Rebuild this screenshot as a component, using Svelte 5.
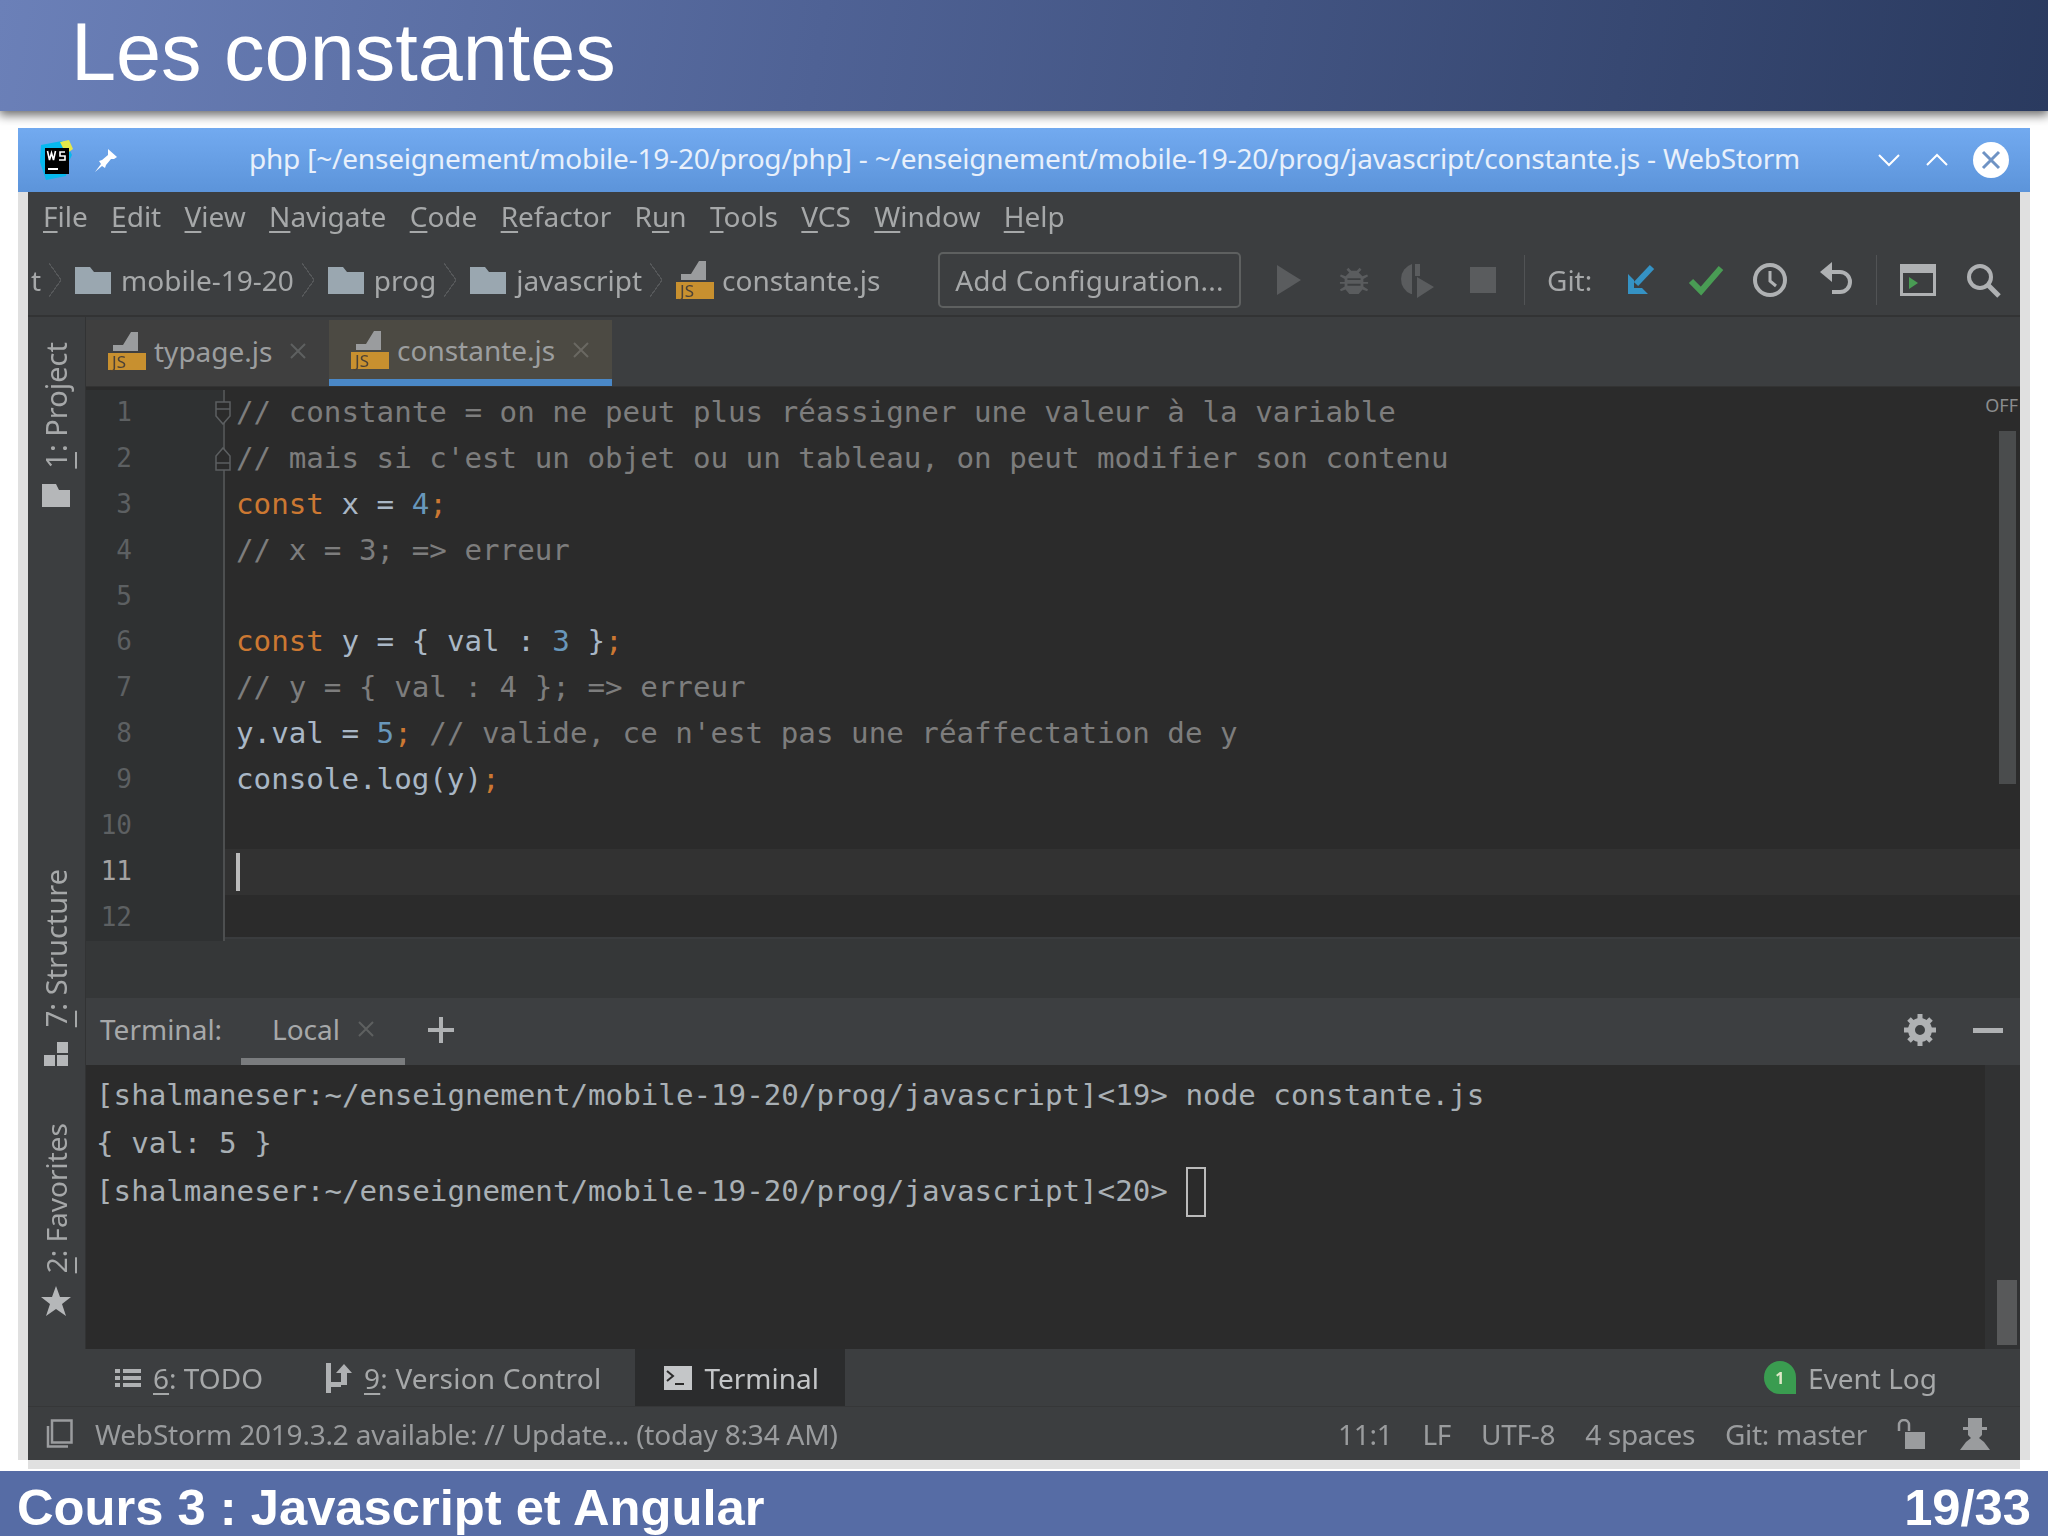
<script>
	// [before mnemonic, mnemonic, after]
	const menus = [['', 'F', 'ile'], ['', 'E', 'dit'], ['', 'V', 'iew'], ['', 'N', 'avigate'], ['', 'C', 'ode'], ['', 'R', 'efactor'], ['R', 'u', 'n'], ['', 'T', 'ools'], ['', 'V', 'CS'], ['', 'W', 'indow'], ['', 'H', 'elp']];

	// token classes: c comment, k keyword, n number, i identifier, p semicolon
	const lines = [
		[['c', "// constante = on ne peut plus réassigner une valeur à la variable"]],
		[['c', "// mais si c'est un objet ou un tableau, on peut modifier son contenu"]],
		[['k', 'const'], ['i', ' x = '], ['n', '4'], ['p', ';']],
		[['c', '// x = 3; => erreur']],
		[],
		[['k', 'const'], ['i', ' y = { val : '], ['n', '3'], ['i', ' }'], ['p', ';']],
		[['c', '// y = { val : 4 }; => erreur']],
		[['i', 'y.val = '], ['n', '5'], ['p', ';'], ['c', " // valide, ce n'est pas une réaffectation de y"]],
		[['i', 'console.log(y)'], ['p', ';']],
		[],
		[],
		[]
	];
	const prompt = '[shalmaneser:~/enseignement/mobile-19-20/prog/javascript]';
</script>

{#snippet jsIcon()}
	<span class="js-icon">
		<svg viewBox="0 0 38 19" width="38" height="19"><path d="M5 19v-6h10l8-13h7v19z" fill="#9a9c9e" /></svg>
		<span class="js-tag">JS</span>
	</span>
{/snippet}

{#snippet folder()}
	<svg class="folder" viewBox="0 0 36 27" width="36" height="27"><path d="M0 0h15l4 5h17v22H0z" fill="#9aa7b0" /></svg>
{/snippet}

<div class="slide">
	<header class="slide-head"><h1>Les constantes</h1></header>

	<main class="slide-body">
		<div class="window">
			<div class="titlebar">
				<svg class="ws-logo" viewBox="0 0 36 40" width="36" height="40">
					<path d="M3 5L24 1l6 6 4 8-4 8-2 13-20 4-6-18z" fill="#07b8ee" />
					<path d="M22 2l9-2 4 9-7 5z" fill="#e4e84a" />
					<rect x="7" y="8" width="24" height="26" fill="#000" />
					<rect x="10" y="28" width="10" height="2" fill="#fff" />
					<path d="M9.500 11l2 9 2-7 2 7 2-9M27 12h-5v4h5v4h-6" stroke="#fff" stroke-width="1.6" fill="none" />
				</svg>
				<svg class="pin" viewBox="0 0 24 24" width="24" height="24"><path d="M14 1l9 8-3 2-3 0-5 6-1 3-3-2-7 6 6-8-2-3 3-1 6-5z" fill="#fff" /></svg>
				<span class="title-text">php [~/enseignement/mobile-19-20/prog/php] - ~/enseignement/mobile-19-20/prog/javascript/constante.js - WebStorm</span>
				<svg class="win-btn" viewBox="0 0 24 14" width="24" height="14"><path d="M2 2l10 10L22 2" fill="none" stroke="#fff" stroke-width="2" /></svg>
				<svg class="win-btn" viewBox="0 0 24 14" width="24" height="14"><path d="M2 12L12 2l10 10" fill="none" stroke="#fff" stroke-width="2" /></svg>
				<svg class="win-close" viewBox="0 0 36 36" width="36" height="36"><circle cx="18" cy="18" r="18" fill="#fff" /><path d="M10 10l16 16M26 10L10 26" stroke="#6f93c4" stroke-width="3" /></svg>
			</div>

			<div class="ide">
				<nav class="menubar">
					{#each menus as m}
						<span>{m[0]}<u>{m[1]}</u>{m[2]}</span>
					{/each}
				</nav>

				<div class="toolbar">
					<div class="crumbs">
						<span>t</span><i class="chev"></i>
						{@render folder()}<span>mobile-19-20</span><i class="chev"></i>
						{@render folder()}<span>prog</span><i class="chev"></i>
						{@render folder()}<span>javascript</span><i class="chev"></i>
						{@render jsIcon()}<span>constante.js</span>
					</div>
					<div class="add-config">Add Configuration...</div>
					<div class="tools">
						<span class="tool"><svg viewBox="0 0 26 32" width="26" height="32"><path d="M1 1l24 15L1 31z" fill="#5a5c5e" /></svg></span>
						<span class="tool"><svg viewBox="0 0 32 36" width="30" height="34"><path d="M10 5l3 3h6l3-3 2 2-3 3 4 4 5-2 1 2-5 3v3h5v2h-5v3l5 3-1 2-5-2-4 5h-10l-4-5-5 2-1-2 5-3v-3H1v-2h5v-3l-5-3 1-2 5 2 4-4-3-3z" fill="#5a5c5e" /><path d="M9 17h14M9 23h14" stroke="#3c3e40" stroke-width="2" /></svg></span>
						<span class="tool"><svg viewBox="0 0 36 36" width="36" height="36"><path d="M12 2a16 16 0 0 0-1 30l1 0z" fill="#5a5c5e" /><path d="M15 2h5v12h-5zM17 15l17 10-17 11z" fill="#5a5c5e" /></svg></span>
						<span class="tool"><svg viewBox="0 0 26 26" width="26" height="26"><rect width="26" height="26" fill="#5a5c5e" /></svg></span>
						<i class="sep"></i>
						<span class="git-label">Git:</span>
						<span class="tool"><svg viewBox="0 0 32 32" width="32" height="32"><path d="M27 3L11 20" stroke="#3592c4" stroke-width="6" /><path d="M3 10v20h20l-6-6H9v-8z" fill="#3592c4" /></svg></span>
						<span class="tool"><svg viewBox="0 0 36 32" width="36" height="32"><path d="M3 17l10 10L33 4" fill="none" stroke="#499c54" stroke-width="6" /></svg></span>
						<span class="tool"><svg viewBox="0 0 36 36" width="36" height="36"><circle cx="18" cy="18" r="15" fill="none" stroke="#afb1b3" stroke-width="4" /><path d="M18 9v10l6 5" fill="none" stroke="#afb1b3" stroke-width="3" /></svg></span>
						<span class="tool"><svg viewBox="0 0 34 38" width="34" height="38"><path d="M11 11h11a9 9 0 0 1 0 20h-8" fill="none" stroke="#afb1b3" stroke-width="4" /><path d="M14 1v20L2 11z" fill="#afb1b3" /></svg></span>
						<i class="sep"></i>
						<span class="tool"><svg viewBox="0 0 36 32" width="36" height="32"><rect x="1.500" y="1.500" width="33" height="29" fill="none" stroke="#afb1b3" stroke-width="3" /><rect x="1" y="1" width="34" height="8" fill="#afb1b3" /><path d="M9 13l9 6-9 6z" fill="#499c54" /></svg></span>
						<span class="tool"><svg viewBox="0 0 36 36" width="36" height="36"><circle cx="15" cy="15" r="11" fill="none" stroke="#afb1b3" stroke-width="4" /><path d="M23 23l11 11" stroke="#afb1b3" stroke-width="5" /></svg></span>
					</div>
				</div>

				<div class="workspace">
					<aside class="strip">
						<div class="strip-item s1">
							<span class="vtext"><u>1</u>: Project</span>
							<svg viewBox="0 0 28 23" width="28" height="23"><path d="M0 23V0h14l3 6h11v17z" fill="#b5b7b9" /></svg>
						</div>
						<div class="strip-item s2">
							<span class="vtext"><u>7</u>: Structure</span>
							<svg viewBox="0 0 24 24" width="24" height="24"><path d="M13 0h11v11H13zM0 13h11v11H0zM13 13h11v11H13z" fill="#b5b7b9" /></svg>
						</div>
						<div class="strip-item s3">
							<span class="vtext"><u>2</u>: Favorites</span>
							<svg viewBox="0 0 30 30" width="30" height="30"><path d="M15 0l4 11h11l-9 7 4 12-10-7-10 7 4-12-9-7h11z" fill="#b5b7b9" /></svg>
						</div>
					</aside>

					<div class="panes">
						<div class="tabs">
							<div class="tab">{@render jsIcon()}<span>typage.js</span><svg class="x" viewBox="0 0 16 16" width="16" height="16"><path d="M1 1l14 14M15 1L1 15" stroke="#5e6060" stroke-width="2" /></svg></div>
							<div class="tab active">{@render jsIcon()}<span>constante.js</span><svg class="x" viewBox="0 0 16 16" width="16" height="16"><path d="M1 1l14 14M15 1L1 15" stroke="#6a6862" stroke-width="2" /></svg></div>
						</div>

						<div class="editor">
							<span class="off">OFF</span>
							<i class="editor-thumb"></i>
							{#each lines as line, i}
								<div class="row" class:current={i === 10}>
									<span class="num">{i + 1}</span>
									<span class="fold">
										{#if i === 0}
											<svg viewBox="0 0 18 30" width="18" height="30"><path d="M2 4h14v14l-7 8-7-8zM2 11h14" fill="#2b2b2b" stroke="#5c5f61" stroke-width="1.500" /></svg>
										{:else if i === 1}
											<svg viewBox="0 0 18 30" width="18" height="30"><path d="M2 26h14V12L9 4l-7 8zM2 19h14" fill="#2b2b2b" stroke="#5c5f61" stroke-width="1.500" /></svg>
										{/if}
									</span>
									<span class="code">{#each line as t}<span class={t[0]}>{t[1]}</span>{/each}{#if i === 10}<i class="caret"></i>{/if}</span>
								</div>
							{/each}
						</div>

						<div class="hscroll"></div>

						<div class="term-head">
							<span class="term-label">Terminal:</span>
							<div class="term-tab">Local<svg class="x" viewBox="0 0 16 16" width="16" height="16"><path d="M1 1l14 14M15 1L1 15" stroke="#5e6060" stroke-width="2" /></svg></div>
							<svg class="plus" viewBox="0 0 26 26" width="26" height="26"><path d="M13 0v26M0 13h26" stroke="#afb1b3" stroke-width="4" /></svg>
							<svg class="gear" viewBox="0 0 32 32" width="32" height="32"><circle cx="16" cy="16" r="8.500" fill="none" stroke="#afb1b3" stroke-width="7" /><path d="M16 0v6M16 26v6M0 16h6M26 16h6M5 5l4 4M23 23l4 4M27 5l-4 4M9 23l-4 4" stroke="#afb1b3" stroke-width="5" /></svg>
							<i class="minus"></i>
						</div>

						<div class="terminal">
							<div class="term-lines">
								<div>{prompt}&lt;19&gt; node constante.js</div>
								<div>{'{'} val: 5 {'}'}</div>
								<div>{prompt}&lt;20&gt; <i class="term-cursor"></i></div>
							</div>
							<div class="term-scroll"><i></i></div>
						</div>
					</div>
				</div>

				<div class="bottombar">
					<div class="bb-item todo">
						<svg viewBox="0 0 26 20" width="26" height="20"><path d="M0 1h5v4H0zM8 1h18v4H8zM0 8h5v4H0zM8 8h18v4H8zM0 15h5v4H0zM8 15h18v4H8z" fill="#afb1b3" /></svg>
						<span><u>6</u>: TODO</span>
					</div>
					<div class="bb-item vcs">
						<svg viewBox="0 0 26 30" width="26" height="30"><path d="M0 0h5v30H0zM5 19h10v5H5z" fill="#afb1b3" /><path d="M15 22V10h-5l8-9 8 9h-5v12z" fill="#afb1b3" /></svg>
						<span><u>9</u>: Version Control</span>
					</div>
					<div class="bb-item term-btn">
						<svg viewBox="0 0 28 24" width="28" height="24"><rect width="28" height="24" fill="#c4c6c8" /><path d="M3 5l6 5-6 5" fill="none" stroke="#2b2b2b" stroke-width="2" /><path d="M11 18h9" stroke="#2b2b2b" stroke-width="2" /></svg>
						<span>Terminal</span>
					</div>
					<div class="bb-item event">
						<span class="badge">1</span>
						<span>Event Log</span>
					</div>
				</div>

				<div class="statusbar">
					<svg viewBox="0 0 30 30" width="30" height="30"><path d="M9 1.500h19.500v22H9zM5 7v20.500h20" fill="none" stroke="#9a9c9e" stroke-width="2.500" /></svg>
					<span class="status-msg">WebStorm 2019.3.2 available: // Update... (today 8:34 AM)</span>
					<div class="status-right">
						<span>11:1</span><span>LF</span><span>UTF-8</span><span>4 spaces</span><span>Git: master</span>
						<svg class="lock" viewBox="0 0 28 30" width="28" height="30"><path d="M2 12V6a5 5 0 0 1 10 0v6" fill="none" stroke="#9a9c9e" stroke-width="2.500" /><rect x="8" y="13" width="20" height="17" fill="#9a9c9e" /></svg>
						<svg class="hector" viewBox="0 0 30 32" width="30" height="32"><path d="M8 0h14v9h5v3h-5v5l-3 3 5 4 6 8H0l6-8 5-4-3-3v-5H3V9h5z" fill="#9a9c9e" /></svg>
					</div>
				</div>
			</div>
		</div>
	</main>

	<footer class="slide-foot">
		<span>Cours 3 : Javascript et Angular</span>
		<span>19/33</span>
	</footer>
</div>

<style>
	:global(body) {
		margin: 0;
		background: #fff;
	}
	.slide {
		width: 2048px;
		height: 1536px;
		display: grid;
		grid-template-rows: 111px 1fr 65px;
		overflow: hidden;
		font-family: 'Noto Sans', sans-serif;
	}
	.slide-head {
		position: relative;
		background: linear-gradient(100deg, #6b80b8 0%, #4f6295 40%, #2a3a5f 100%);
		box-shadow: 0 3px 10px 1px rgba(0, 0, 0, 0.6);
		z-index: 2;
		display: flex;
		align-items: center;
		padding: 0 0 7px 71px;
		box-sizing: border-box;
	}
	h1 {
		margin: 0;
		font: 400 81px 'Liberation Sans', sans-serif;
		color: #fff;
	}
	.slide-body {
		padding: 17px 18px 11px;
		min-height: 0;
	}
	.slide-foot {
		background: #566ca5;
		color: #fff;
		font: 700 50.700px 'Liberation Sans', sans-serif;
		display: flex;
		justify-content: space-between;
		align-items: center;
		padding: 8px 17px 0;
	}
	.window {
		height: 100%;
		display: flex;
		flex-direction: column;
		filter: blur(0.6px);
	}
	.titlebar {
		height: 64px;
		flex: none;
		background: linear-gradient(#72aaf0, #5c94da);
		display: flex;
		align-items: center;
		padding-left: 20px;
		color: #e8f0fb;
	}
	.pin {
		margin-left: 20px;
	}
	.title-text {
		font-size: 28px;
		margin: 0 0 4px 131px;
		flex: 1;
		white-space: nowrap;
		letter-spacing: -0.200px;
	}
	.win-btn {
		margin-right: 24px;
	}
	.win-close {
		margin-right: 21px;
	}
	.ide {
		flex: 1;
		min-height: 0;
		margin: 0 10px;
		background: #3c3e40;
		display: flex;
		flex-direction: column;
		color: #a6a8a9;
		font-size: 28px;
		box-shadow: 0 9px 0 0 #e0e0e0, -10px 0 0 0 #e0e0e0, 10px 0 0 0 #e0e0e0;
	}
	u {
		text-underline-offset: 4px;
		text-decoration-thickness: 2px;
	}
	.menubar {
		height: 53px;
		flex: none;
		display: flex;
		align-items: center;
		gap: 23.300px;
		padding: 0 0 5px 15px;
		box-sizing: border-box;
	}
	.toolbar {
		height: 72px;
		flex: none;
		display: flex;
		align-items: center;
		border-bottom: 2px solid #323334;
		box-sizing: border-box;
	}
	.crumbs {
		display: flex;
		align-items: center;
		width: 910px;
		padding-left: 3px;
		box-sizing: border-box;
		white-space: nowrap;
	}
	.folder {
		margin-right: 10px;
	}
	.chev {
		width: 12px;
		height: 34px;
		margin: 0 14px 0 8px;
		flex: none;
		background: linear-gradient(to top right, transparent 47%, #555759 47%, #555759 53%, transparent 53%) top / 100% 50% no-repeat,
			linear-gradient(to bottom right, transparent 47%, #555759 47%, #555759 53%, transparent 53%) bottom / 100% 50% no-repeat;
		transform: scaleY(-1);
	}
	.js-icon {
		position: relative;
		display: inline-block;
		width: 38px;
		height: 38px;
		margin-right: 8px;
		flex: none;
	}
	.js-icon svg {
		position: absolute;
		top: 0;
		left: 0;
	}
	.js-tag {
		position: absolute;
		left: 0;
		bottom: 0;
		width: 38px;
		height: 17px;
		background: #c8902f;
		color: #4b4136;
		font-size: 17px;
		line-height: 17px;
		padding-left: 4px;
		box-sizing: border-box;
	}
	.add-config {
		width: 303px;
		height: 56px;
		box-sizing: border-box;
		border: 2px solid #5e6060;
		border-radius: 5px;
		display: flex;
		align-items: center;
		justify-content: center;
		white-space: nowrap;
		letter-spacing: 0.250px;
	}
	.tools {
		display: flex;
		align-items: center;
		margin-left: 16px;
	}
	.tool {
		width: 64.500px;
		display: flex;
		justify-content: center;
		align-items: center;
		flex: none;
	}
	.sep {
		width: 1px;
		height: 50px;
		background: #515355;
		margin: 0 9px 0 9px;
		flex: none;
	}
	.git-label {
		width: 64px;
		margin-left: 13px;
		margin-right: -2px;
	}
	.workspace {
		flex: 1;
		min-height: 0;
		display: flex;
	}
	.strip {
		width: 58px;
		flex: none;
		box-sizing: border-box;
		padding-right: 2px;
		display: flex;
		flex-direction: column;
		align-items: center;
		font-size: 29px;
		color: #a6a8a9;
		border-right: 1px solid #323334;
	}
	.strip-item {
		display: flex;
		flex-direction: column;
		align-items: center;
		gap: 15px;
	}
	.vtext {
		writing-mode: vertical-rl;
		transform: rotate(180deg);
		white-space: nowrap;
		line-height: 1;
	}
	.s1 {
		margin-top: 25px;
	}
	.s2 {
		margin-top: 362px;
	}
	.s3 {
		margin-top: 57px;
		font-size: 28px;
		gap: 13px;
	}
	.panes {
		flex: 1;
		min-width: 0;
		display: flex;
		flex-direction: column;
	}
	.tabs {
		height: 70px;
		flex: none;
		display: flex;
		background: #3c3e40;
		padding-top: 3px;
		box-sizing: border-box;
		border-bottom: 1px solid #333;
	}
	.tab {
		display: flex;
		align-items: center;
		padding: 0 0 5px 22px;
		background: #3f3f3f;
		width: 243px;
		box-sizing: border-box;
		white-space: nowrap;
		color: #9c9e9f;
	}
	.tab.active {
		width: 283px;
		background: #4c4a43;
		border-bottom: 7px solid #4a88c7;
		padding-bottom: 0;
	}
	.x {
		margin-left: 18px;
		flex: none;
	}
	.editor {
		position: relative;
		height: 552px;
		flex: none;
		background: #2b2b2b;
		box-sizing: border-box;
		padding-top: 3px;
		border-bottom: 2px solid #3a3c3e;
		font: 29.200px/45.900px 'DejaVu Sans Mono', monospace;
	}
	.off {
		position: absolute;
		right: 2px;
		top: 6px;
		font: 18px 'Noto Sans', sans-serif;
		color: #8b8d8e;
	}
	.editor-thumb {
		position: absolute;
		right: 4px;
		top: 44px;
		width: 17px;
		height: 353px;
		background: #4a4c4d;
	}
	.row {
		display: flex;
		height: 45.900px;
	}
	.num {
		width: 46px;
		text-align: right;
		flex: none;
		font-size: 26px;
		color: #5d6062;
		background: #2f3132;
	}
	.current .num {
		color: #a4a3a3;
	}
	.fold {
		width: 93px;
		flex: none;
		box-sizing: border-box;
		display: flex;
		align-items: center;
		justify-content: flex-end;
		background: #2f3132;
		border-right: 2px solid #4d4f50;
	}
	.fold svg {
		margin-right: -9px;
		position: relative;
	}
	.code {
		flex: 1;
		padding-left: 11px;
		white-space: pre;
		display: flex;
		align-items: center;
	}
	.current .code {
		background: #323232;
	}
	.c {
		color: #7d7d7d;
	}
	.k {
		color: #cc7832;
	}
	.n {
		color: #6897bb;
	}
	.i {
		color: #a9b7c6;
	}
	.p {
		color: #cc7832;
	}
	.caret {
		width: 4px;
		height: 38px;
		background: #bbb;
		display: block;
	}
	.hscroll {
		height: 59px;
		flex: none;
		background: #353738;
	}
	.term-head {
		height: 67px;
		flex: none;
		display: flex;
		align-items: center;
		background: #3d3f41;
		padding-left: 14px;
	}
	.term-label {
		width: 141px;
		flex: none;
		margin-bottom: 5px;
	}
	.term-tab {
		width: 164px;
		height: 67px;
		box-sizing: border-box;
		display: flex;
		align-items: center;
		padding: 2px 0 0 31px;
		border-bottom: 7px solid #7a7c7e;
		flex: none;
	}
	.term-tab .x {
		margin-left: 18px;
	}
	.plus {
		margin: 0 0 3px 23px;
	}
	.gear {
		margin: 0 0 3px auto;
	}
	.minus {
		width: 30px;
		height: 5px;
		background: #afb1b3;
		margin: 0 17px 3px 37px;
	}
	.terminal {
		flex: 1;
		min-height: 0;
		background: #2b2b2b;
		display: flex;
		justify-content: space-between;
		font: 29.200px/48px 'DejaVu Sans Mono', monospace;
		color: #a9b0b5;
	}
	.term-lines {
		padding: 6px 0 0 10px;
	}
	.term-lines div {
		white-space: pre;
		height: 48px;
	}
	.term-cursor {
		display: inline-block;
		width: 20px;
		height: 50px;
		box-sizing: border-box;
		border: 2px solid #bbb;
		vertical-align: -16px;
	}
	.term-scroll {
		width: 35px;
		background: #313233;
		position: relative;
	}
	.term-scroll i {
		position: absolute;
		left: 12px;
		right: 3px;
		bottom: 4px;
		height: 65px;
		background: #58595a;
	}
	.bottombar {
		height: 58px;
		flex: none;
		display: flex;
		align-items: stretch;
		border-bottom: 1px solid #363738;
		box-sizing: border-box;
	}
	.bb-item {
		display: flex;
		align-items: center;
		gap: 12px;
	}
	.todo {
		margin-left: 87px;
	}
	.vcs {
		margin-left: 63px;
		letter-spacing: 0.200px;
	}
	.term-btn {
		margin-left: 34px;
		width: 210px;
		box-sizing: border-box;
		padding-left: 29px;
		background: #2b2c2d;
		color: #c4c6c8;
	}
	.event {
		margin-left: auto;
		margin-right: 83px;
	}
	.badge {
		width: 32px;
		height: 33px;
		background: #3a9c50;
		border-radius: 50% 50% 0 50%;
		color: #dfe8c8;
		font-size: 16px;
		font-weight: 700;
		display: flex;
		align-items: center;
		justify-content: center;
	}
	.statusbar {
		height: 53px;
		flex: none;
		display: flex;
		align-items: center;
		padding-left: 15px;
		color: #9a9c9e;
		font-size: 28px;
	}
	.status-msg {
		margin-left: 22px;
		letter-spacing: -0.200px;
		white-space: nowrap;
	}
	.status-right {
		margin-left: auto;
		display: flex;
		align-items: center;
		gap: 30px;
		margin-right: 30px;
		white-space: nowrap;
		letter-spacing: -0.300px;
	}
	.lock {
		margin-right: 5px;
	}
</style>
